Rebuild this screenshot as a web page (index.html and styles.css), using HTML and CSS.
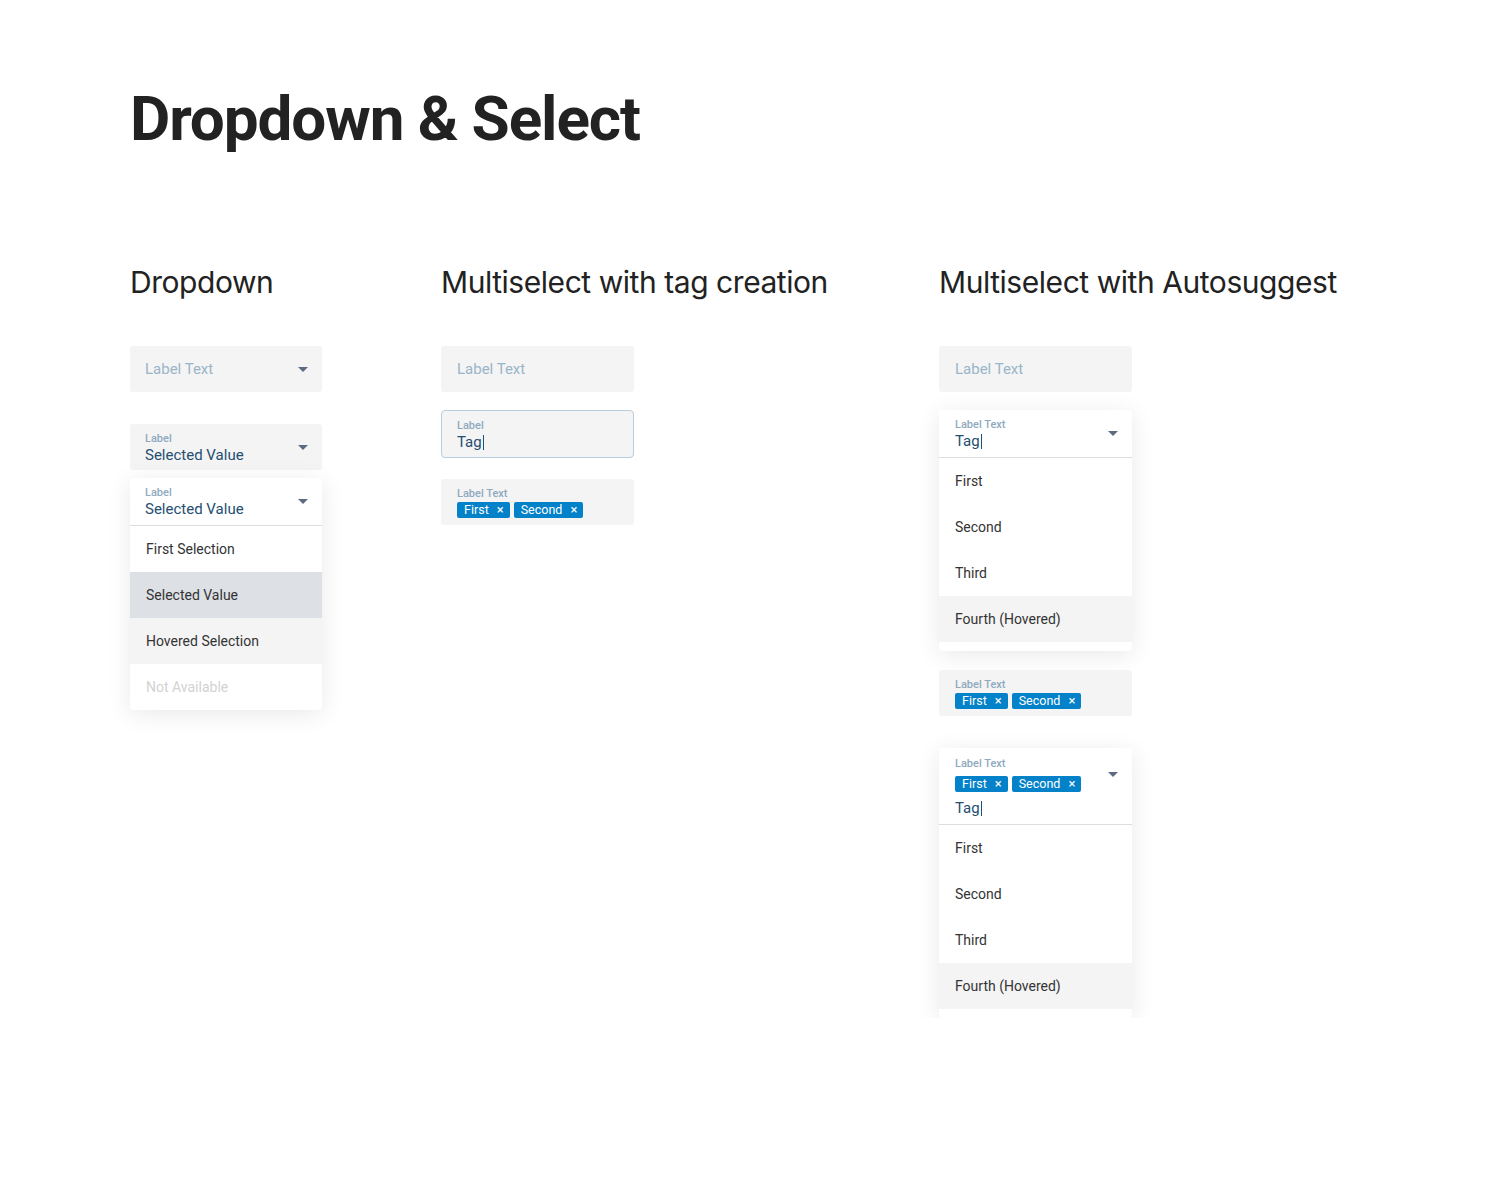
FILE: index.html
```html
<!DOCTYPE html>
<html>
<head>
<meta charset="utf-8">
<link rel="stylesheet" href="styles.css">
</head>
<body>
<div class="page">
  <h1 class="title">Dropdown &amp; Select</h1>
  <div class="columns">
    <section class="col col-1">
      <h2 class="heading">Dropdown</h2>
      <div class="stack">
        <div class="field">
          <span class="placeholder">Label Text</span>
          <span class="arrow"></span>
        </div>
        <div class="field filled gap-32">
          <div class="content">
            <div class="label">Label</div>
            <div class="value">Selected Value</div>
          </div>
          <span class="arrow"></span>
        </div>
        <div class="menu gap-8">
          <div class="menu-head">
            <div class="content">
              <div class="label">Label</div>
              <div class="value">Selected Value</div>
            </div>
            <span class="arrow"></span>
          </div>
          <div class="item">First Selection</div>
          <div class="item selected">Selected Value</div>
          <div class="item hovered">Hovered Selection</div>
          <div class="item disabled">Not Available</div>
        </div>
      </div>
    </section>

    <section class="col col-2">
      <h2 class="heading">Multiselect with tag creation</h2>
      <div class="stack">
        <div class="field">
          <span class="placeholder">Label Text</span>
        </div>
        <div class="field filled focused gap-18">
          <div class="content">
            <div class="label">Label</div>
            <div class="value">Tag<span class="caret"></span></div>
          </div>
        </div>
        <div class="field filled gap-21">
          <div class="content">
            <div class="label">Label Text</div>
            <div class="tags">
              <span class="tag">First<span class="x">×</span></span>
              <span class="tag">Second<span class="x">×</span></span>
            </div>
          </div>
        </div>
      </div>
    </section>

    <section class="col col-3">
      <h2 class="heading">Multiselect with Autosuggest</h2>
      <div class="stack">
        <div class="field">
          <span class="placeholder">Label Text</span>
        </div>
        <div class="menu gap-18">
          <div class="menu-head">
            <div class="content">
              <div class="label">Label Text</div>
              <div class="value">Tag<span class="caret"></span></div>
            </div>
            <span class="arrow"></span>
          </div>
          <div class="item">First</div>
          <div class="item">Second</div>
          <div class="item">Third</div>
          <div class="item hovered">Fourth (Hovered)</div>
          <div class="menu-foot"></div>
        </div>
        <div class="field filled gap-19">
          <div class="content">
            <div class="label">Label Text</div>
            <div class="tags">
              <span class="tag">First<span class="x">×</span></span>
              <span class="tag">Second<span class="x">×</span></span>
            </div>
          </div>
        </div>
        <div class="menu gap-32">
          <div class="menu-head tall">
            <div class="content">
              <div class="label">Label Text</div>
              <div class="tags">
                <span class="tag">First<span class="x">×</span></span>
                <span class="tag">Second<span class="x">×</span></span>
              </div>
              <div class="value">Tag<span class="caret"></span></div>
            </div>
            <span class="arrow top"></span>
          </div>
          <div class="item">First</div>
          <div class="item">Second</div>
          <div class="item">Third</div>
          <div class="item hovered">Fourth (Hovered)</div>
          <div class="menu-foot"></div>
        </div>
      </div>
    </section>
  </div>
</div>
</body>
</html>
```

FILE: styles.css
```css
* { box-sizing: border-box; }
html, body { margin: 0; padding: 0; background: #ffffff; }
body { font-family: Roboto, "Liberation Sans", sans-serif; color: #262626; }

.page { padding: 88px 0 0 130px; }

.title {
  margin: 0;
  font-family: Roboto, sans-serif;
  font-weight: 700;
  font-size: 62px;
  line-height: 62px;
  color: #222222;
  letter-spacing: -1.1px;
}

.columns { display: flex; margin-top: 117px; }
.col { flex: none; }
.col-1 { width: 311px; }
.col-2 { width: 498px; }
.col-3 { width: 450px; }

.heading {
  margin: 0;
  font-family: Inter, "Noto Sans", sans-serif;
  font-weight: 400;
  font-size: 30px;
  line-height: 30px;
  color: #222222;
  letter-spacing: -0.45px;
  white-space: nowrap;
}

.stack { display: flex; flex-direction: column; width: 193px; margin-top: 49px; }
.col-1 .stack { width: 192px; }

.gap-8 { margin-top: 8px; }
.gap-18 { margin-top: 18px; }
.gap-19 { margin-top: 19px; }
.gap-21 { margin-top: 21px; }
.gap-32 { margin-top: 32px; }

.field {
  height: 46px;
  background: #f4f4f4;
  border-radius: 3px;
  display: flex;
  align-items: center;
  justify-content: space-between;
  padding: 0 14px 0 16px;
}
.col-1 .field { padding-left: 15px; }

.placeholder { font-size: 15px; color: #9ab5c9; }

.arrow {
  width: 0; height: 0;
  border-left: 5px solid transparent;
  border-right: 5px solid transparent;
  border-top: 5px solid #5d6b80;
  flex: none;
}
.arrow.top { align-self: flex-start; margin-top: 16px; }

.field.filled { align-items: flex-start; padding-top: 8px; }
.field.filled .arrow { margin-top: 13px; }

.field.focused {
  height: 48px;
  border: 1px solid #b7cddc;
  border-radius: 4px;
  padding: 8px 14px 0 15px;
}

.content { display: flex; flex-direction: column; }

.label {
  font-size: 11px;
  line-height: 13px;
  font-weight: 500;
  color: #8eaac0;
}

.value {
  font-size: 15px;
  line-height: 18px;
  margin-top: 1px;
  color: #244e72;
  display: flex;
  align-items: center;
}

.caret {
  display: inline-block;
  width: 1px;
  height: 15px;
  background: #244e72;
  margin-left: 1px;
}

.tags { display: flex; gap: 4px; margin-top: 2px; }

.tag {
  display: inline-flex;
  align-items: center;
  height: 16px;
  padding: 0 6px 0 7px;
  background: #0381c9;
  color: #ffffff;
  font-size: 12.5px;
  font-weight: 400;
  border-radius: 2px;
  line-height: 16px;
}
.tag .x { margin-left: 8px; font-size: 13px; font-weight: 400; }

.menu {
  background: #ffffff;
  border-radius: 3px;
  box-shadow: 0 4px 24px rgba(0, 0, 0, 0.09);
  display: flex;
  flex-direction: column;
  overflow: hidden;
}

.menu-head {
  height: 48px;
  display: flex;
  justify-content: space-between;
  align-items: center;
  padding: 0 14px 0 16px;
  border-bottom: 1px solid #dddddd;
}
.col-1 .menu-head { padding-left: 15px; }
.menu-head .content { padding-top: 1px; }
.menu-head.tall {
  height: 77px;
  align-items: flex-start;
  padding-top: 8px;
}
.menu-head.tall .tags { margin-top: 6px; }
.menu-head.tall .value { margin-top: 7px; }

.item {
  height: 46px;
  display: flex;
  align-items: center;
  padding-left: 16px;
  font-size: 14px;
  color: #333333;
}
.item.selected { background: #dde0e5; }
.item.hovered { background: #f4f4f4; }
.item.disabled { color: #d2d2d2; }

.menu-foot { height: 9px; }
```
